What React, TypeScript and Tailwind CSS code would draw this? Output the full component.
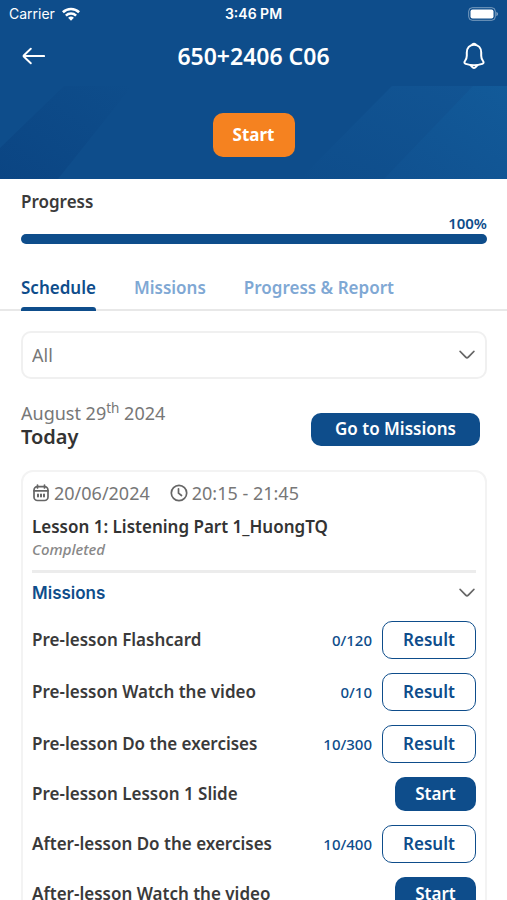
import React from "react";

interface Mission {
    name: string;
    score?: string;
}

const tabs = ["Schedule", "Missions", "Progress & Report"];

const missions: Mission[] = [
    { name: "Pre-lesson Flashcard", score: "0/120" },
    { name: "Pre-lesson Watch the video", score: "0/10" },
    { name: "Pre-lesson Do the exercises", score: "10/300" },
    { name: "Pre-lesson Lesson 1 Slide" },
    { name: "After-lesson Do the exercises", score: "10/400" },
    { name: "After-lesson Watch the video" },
];

const ChevronIcon: React.FC<{ className?: string }> = ({ className = "" }) => (
    <svg
        viewBox="0 0 16 10"
        className={`h-[10px] w-4 shrink-0 ${className}`}
        fill="none"
        stroke="#666"
        strokeWidth="1.8"
        strokeLinecap="round"
        strokeLinejoin="round"
        aria-hidden="true"
    >
        <path d="M1.2 1.5 6.7 7.2Q8 8.5 9.3 7.2L14.8 1.5" />
    </svg>
);

const StatusBar: React.FC = () => (
    <div className="grid h-7 grid-cols-3 items-center px-[9px] font-['Inter',sans-serif] text-sm text-white">
        <div className="flex items-center gap-[7px]">
            <span>Carrier</span>
            <svg viewBox="0 0 18 14" className="h-[14px] w-[18px]" aria-hidden="true">
                <g fill="none" stroke="#fff" strokeWidth="2.6">
                    <path d="M.9 5.2a11.7 11.7 0 0 1 16.2 0" />
                    <path d="M3.9 8.6a7.4 7.4 0 0 1 10.2 0" />
                </g>
                <path d="M9 13.8 6.1 10.8a4.2 4.2 0 0 1 5.8 0Z" fill="#fff" />
            </svg>
        </div>
        <span className="text-center font-semibold">3:46 PM</span>
        <svg
            viewBox="0 0 30 14"
            className="h-[14px] w-[30px] justify-self-end"
            aria-hidden="true"
        >
            <rect x=".7" y=".7" width="26.6" height="12.6" rx="3.6" fill="none" stroke="#fff" strokeOpacity=".45" />
            <rect x="2.5" y="2.5" width="23" height="9" rx="2" fill="#fff" />
            <path d="M28.4 4.8q1.6.8 1.6 2.2t-1.6 2.2Z" fill="#fff" fillOpacity=".5" />
        </svg>
    </div>
);

const Header: React.FC = () => (
    <header className="shrink-0 bg-[#0e4d8b]">
        <StatusBar />
        <div className="flex h-[58px] items-center justify-between px-[21px] pb-[2px]">
            <button aria-label="Back" className="flex h-6 w-6 items-center">
                <svg
                    viewBox="0 0 24 18"
                    className="h-[18px] w-6"
                    fill="none"
                    stroke="#fff"
                    strokeWidth="1.9"
                    strokeLinecap="round"
                    strokeLinejoin="round"
                >
                    <path d="M23.1 9H2.5M9.8 1.7 3 8.2Q2.200 9 3 9.800L9.800 16.300" />
                </svg>
            </button>
            <h1 className="text-[23px] leading-7 font-semibold text-white">650+2406 C06</h1>
            <button aria-label="Notifications" className="flex h-7 w-6 items-center">
                <svg
                    viewBox="0 0 24 28"
                    className="h-7 w-6"
                    fill="none"
                    stroke="#fff"
                    strokeWidth="2"
                    strokeLinecap="round"
                    strokeLinejoin="round"
                >
                    <path d="M10.3 2.5Q12 .9 13.7 2.5" />
                    <path d="M12 2.7C7.600 2.700 4.800 6 4.800 10.500v3.200c0 2.600-.6 3.700-1.800 5.300-1 1.400-.7 2.400.7 2.900 5.200 1.800 11.400 1.800 16.600 0 1.400-.5 1.700-1.500.7-2.900-1.200-1.600-1.800-2.700-1.800-5.300v-3.200C19.200 6 16.400 2.700 12 2.700Z" />
                    <path d="M8.600 23.400 10.800 25.500Q12 26.500 13.200 25.500L15.400 23.400" />
                </svg>
            </button>
        </div>
        <div className="relative flex h-[93px] items-center justify-center overflow-hidden">
            <svg
                viewBox="0 0 507 93"
                preserveAspectRatio="none"
                className="absolute inset-0 h-full w-full"
                aria-hidden="true"
            >
                <defs>
                    <linearGradient id="shade" x1="0" y1="1" x2="1" y2="0">
                        <stop offset="0" stopColor="#0b4583" />
                        <stop offset="1" stopColor="#0e4d8b" />
                    </linearGradient>
                    <linearGradient id="glow" x1="0" y1="1" x2="1" y2="0">
                        <stop offset="0" stopColor="#0e4d8b" />
                        <stop offset="1" stopColor="#125594" />
                    </linearGradient>
                    <linearGradient id="beam" x1="0" y1="1" x2="1" y2="0">
                        <stop offset="0" stopColor="#105190" />
                        <stop offset="1" stopColor="#125a99" />
                    </linearGradient>
                </defs>
                <path d="M0 62 64 0h68L58 93H0Z" fill="url(#shade)" />
                <path d="M300 93 392 0h115v93Z" fill="url(#glow)" />
                <path d="M384 93 473 0h34v93Z" fill="url(#beam)" />
            </svg>
            <button className="relative mt-[5px] h-11 w-[82px] rounded-[10px] bg-[#f58220] text-[17px] font-bold text-white">
                Start
            </button>
        </div>
    </header>
);

const ProgressSection: React.FC = () => (
    <section className="pt-[13px] pr-5 pl-[21px]">
        <h2 id="progress-label" className="text-[17px] leading-5 font-semibold text-[#3a3a3a]">
            Progress
        </h2>
        <p className="pt-[3px] text-right text-[15px] leading-4 font-semibold text-[#0e4d8b]">
            100%
        </p>
        <div
            role="progressbar"
            aria-labelledby="progress-label"
            aria-valuenow={100}
            className="mt-[3px] h-[10px] rounded-full bg-[#0e4d8b]"
        />
    </section>
);

const Tabs: React.FC = () => (
    <nav className="mt-[34px] flex gap-[38px] border-b-2 border-[#e8e8e8] pr-5 pl-[21px] text-[17px] leading-5 font-semibold">
        {tabs.map((tab, index) => (
            <button
                key={tab}
                className={`relative -mb-[2px] pb-[13px] ${
                    index === 0 ? "text-[#0e4d8b]" : "text-[#7fa8d4]"
                }`}
            >
                {tab}
                {index === 0 && (
                    <span className="absolute inset-x-0 bottom-0 h-1 rounded-t-[3px] bg-[#0e4d8b]" />
                )}
            </button>
        ))}
    </nav>
);

const MissionRow: React.FC<{ mission: Mission }> = ({ mission }) => (
    <li className="flex items-center gap-[10px]">
        <span className="flex-1 text-[17px] leading-5 font-semibold text-[#3a3a3a]">
            {mission.name}
        </span>
        {mission.score ? (
            <>
                <span className="text-[15px] font-medium text-[#0e4d8b]">
                    {mission.score}
                </span>
                <button className="h-[38px] w-[94px] rounded-[10px] border border-[#0e4d8b] text-[17px] font-semibold text-[#0e4d8b]">
                    Result
                </button>
            </>
        ) : (
            <button className="h-[34px] w-[81px] rounded-[10px] bg-[#0e4d8b] text-[17px] font-semibold text-white">
                Start
            </button>
        )}
    </li>
);

const LessonCard: React.FC = () => (
    <article className="mt-[21px] rounded-t-xl border-2 border-[#f3f3f3] px-[9px] pt-[11px] pb-4">
        <div className="flex items-center gap-5 text-lg leading-5 text-[#777]">
            <span className="flex items-center gap-1">
                <svg
                    viewBox="0 0 18 18"
                    className="h-[18px] w-[18px]"
                    fill="none"
                    stroke="#666"
                    strokeWidth="1.7"
                    strokeLinecap="round"
                    aria-hidden="true"
                >
                    <rect x="2" y="2.7" width="14" height="13.8" rx="3.5" />
                    <path d="M2 6.8h14M5.5 1v3M12.5 1v3" />
                    <path d="M6 10.5v2M9 10.5v2M12 10.5v2" strokeWidth="2" />
                </svg>
                20/06/2024
            </span>
            <span className="flex items-center gap-1">
                <svg
                    viewBox="0 0 18 18"
                    className="h-[18px] w-[18px]"
                    fill="none"
                    stroke="#666"
                    strokeWidth="1.7"
                    strokeLinecap="round"
                    strokeLinejoin="round"
                    aria-hidden="true"
                >
                    <circle cx="9" cy="9" r="7.7" />
                    <path d="M8.5 4.8v4.4l3 2.3" />
                </svg>
                20:15 - 21:45
            </span>
        </div>
        <h3 className="mt-3 text-[17px] leading-6 font-semibold text-[#333]">
            Lesson 1: Listening Part 1_HuongTQ
        </h3>
        <p className="text-[15px] leading-5 font-medium text-[#888] italic">Completed</p>
        <hr className="mt-[11px] border-t-[3px] border-[#ececec]" />
        <button className="mt-2 flex w-full items-center justify-between pr-px font-['Inter',sans-serif] text-[17px] leading-6 font-semibold text-[#0e4d8b]">
            Missions
            <ChevronIcon />
        </button>
        <ul className="mt-4 flex flex-col gap-[14px]">
            {missions.map((mission) => (
                <MissionRow key={mission.name} mission={mission} />
            ))}
        </ul>
    </article>
);

export default function App() {
    return (
        <div className="flex h-screen flex-col bg-white font-['Noto_Sans',sans-serif]">
            <Header />
            <main className="min-h-0 flex-1 overflow-y-auto [scrollbar-width:none]">
                <ProgressSection />
                <Tabs />
                <div className="pt-5 pr-5 pl-[21px]">
                    {/* Status filter */}
                    <div className="grid items-center">
                        <select
                            aria-label="Filter lessons"
                            className="col-start-1 row-start-1 h-12 w-full appearance-none rounded-[10px] border-2 border-[#f0f0f0] bg-white px-[9px] text-lg text-[#777]"
                        >
                            <option>All</option>
                        </select>
                        <ChevronIcon className="pointer-events-none col-start-1 row-start-1 mr-3 justify-self-end" />
                    </div>

                    {/* Current day */}
                    <div className="mt-[22px] flex items-center justify-between pr-[7px]">
                        <div>
                            <p className="text-lg leading-6 text-[#777]">
                                August 29<sup>th</sup> 2024
                            </p>
                            <h2 className="text-xl leading-6 font-semibold text-[#333]">
                                Today
                            </h2>
                        </div>
                        <button className="mt-2 h-[33px] w-[169px] rounded-[10px] bg-[#0e4d8b] text-[17px] font-semibold text-white">
                            Go to Missions
                        </button>
                    </div>

                    <LessonCard />
                </div>
            </main>
        </div>
    );
}
